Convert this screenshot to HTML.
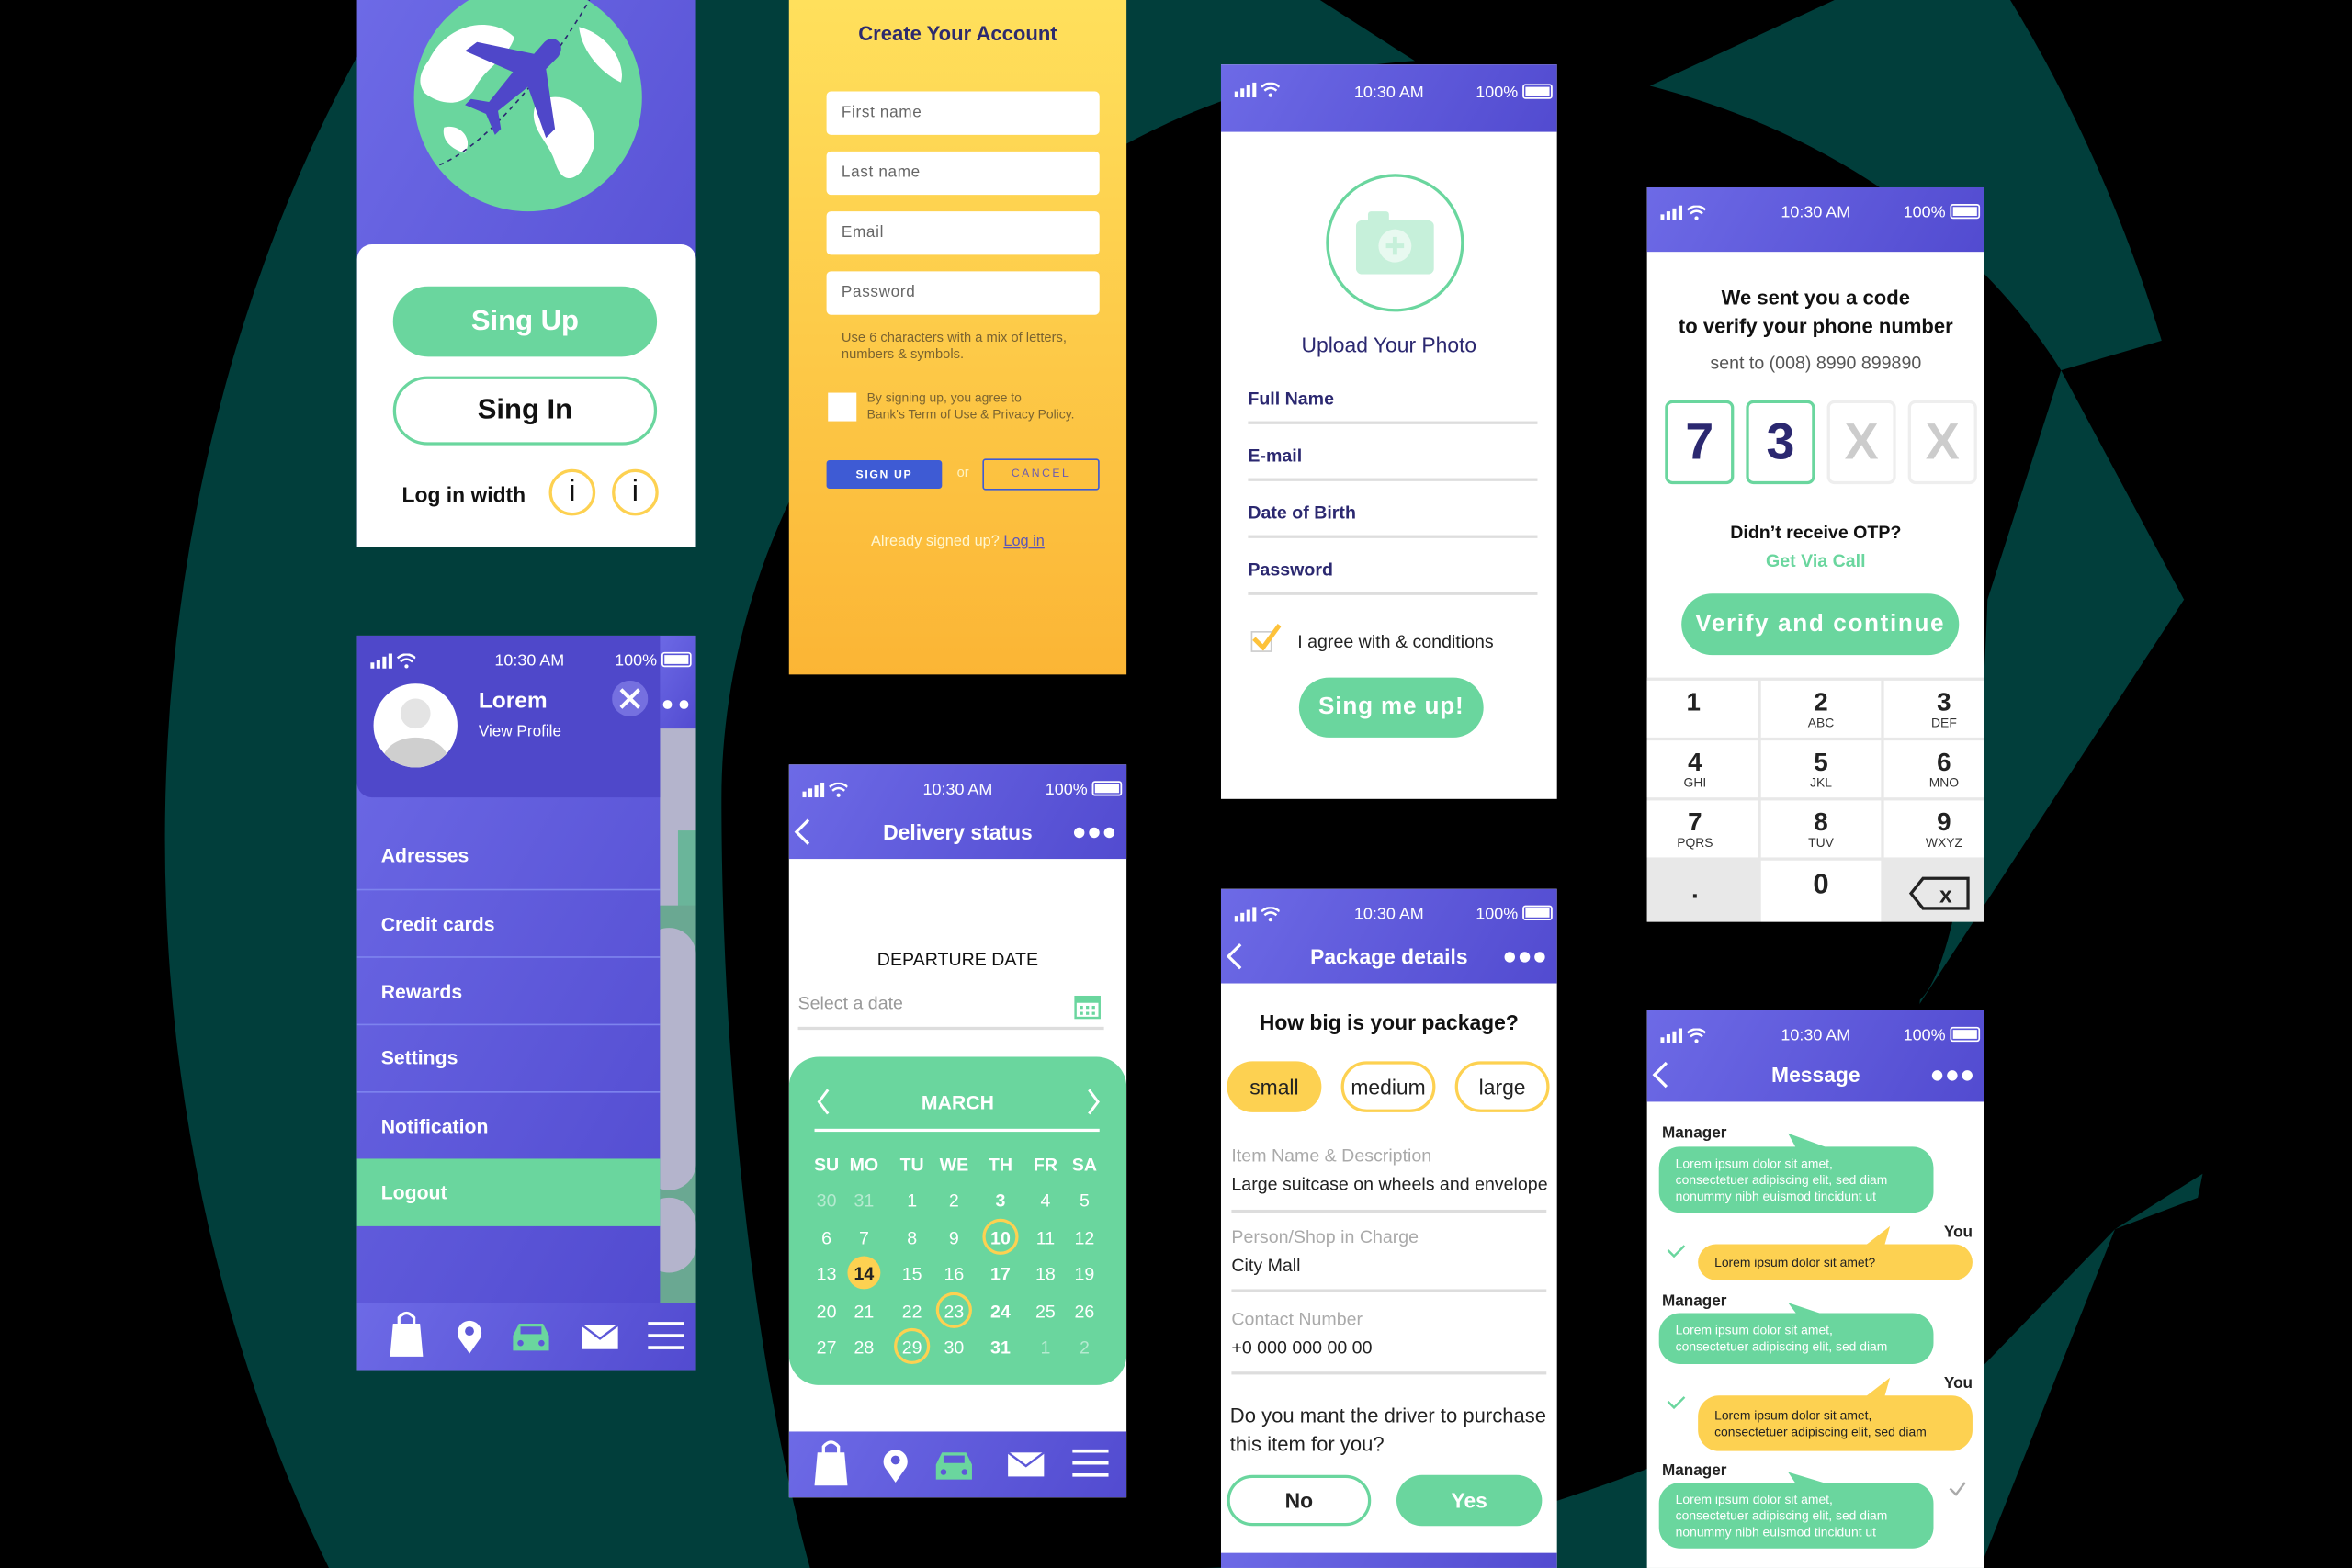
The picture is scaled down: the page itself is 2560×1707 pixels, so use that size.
<!DOCTYPE html>
<html><head><meta charset="utf-8"><style>
*{margin:0;padding:0;box-sizing:border-box}
html,body{width:2560px;height:1707px;overflow:hidden;background:#000}
#w{position:absolute;left:0;top:0;width:1568px;height:1046px;overflow:hidden;transform:scale(1.63265,1.6319);transform-origin:0 0;font-family:"Liberation Sans",sans-serif}
.a{position:absolute}
.pan{position:absolute;overflow:hidden;background:#fff}
.pur{background:linear-gradient(120deg,#6d6ae6,#524bd0)}
.sb{position:absolute;left:0;right:0;height:30px;color:#fff;font-size:11px}
.sb .t{position:absolute;left:0;right:0;text-align:center;top:11px}
.sb .p{position:absolute;right:26px;top:11px}
.sb .bat{position:absolute;right:3px;top:11px;width:20px;height:10px;border:1.5px solid #fff;border-radius:2px;background:#fff;box-shadow:inset 0 0 0 1px #5a55d8}
.sb .sig{position:absolute;left:9px;top:12px}
.hd{position:absolute;left:0;right:0;color:#fff;font-weight:bold;font-size:14px;text-align:center}
.dots{position:absolute;right:8px;color:#fff;font-size:10px;letter-spacing:2px}
.dots i{display:inline-block;width:7px;height:7px;border-radius:50%;background:#fff;margin-left:3px}
.g{background:#6ad69e}
.lbl{position:absolute;font-size:12px;font-weight:bold;color:#2b2870}
.ln{position:absolute;height:1.5px;background:#ddd}
.in{position:absolute;left:25px;width:182px;height:29px;background:#fff;border-radius:3px;font-size:10.5px;color:#666;padding:8px 10px;letter-spacing:.4px}
.cal span{position:absolute;width:24px;margin-left:-12px;text-align:center;color:#fff;font-size:12px}
.key{position:absolute;text-align:center;font-weight:bold;font-size:17px;color:#222;line-height:17px}
.key small{display:block;font-size:8.5px;font-weight:normal;line-height:10px;color:#333}
.bub{position:absolute;border-radius:14px;font-size:8.5px;line-height:11px;padding:6px 11px}
.mg{left:8px;width:183px;background:#6ad69e;color:#fff}
.yo{left:34px;width:183px;background:#fdd151;color:#222}
.nm{position:absolute;font-size:10.5px;font-weight:bold;color:#222}
</style></head><body><div id="w">
<svg class="a" style="left:0;top:0" width="1568" height="1046">
<ellipse cx="800" cy="560" rx="690" ry="900" fill="#013e3b"/>
<path d="M481 533 C481 280 700 45 960 40 C1150 40 1300 130 1374 247 L1325 400 C1320 550 1300 650 1280 667 L1260 900 C1100 1000 900 1046 800 1046 L540 1046 C500 900 481 700 481 533Z" fill="#000"/>
<path d="M880 0 L1223 0 L1036 87 L950 45Z" fill="#000"/>
<path d="M1374 247 L1568 190 L1568 420 L1456 400Z" fill="#000"/>
<path d="M1456 400 L1568 400 L1568 720 L1410 820 L1300 934 L1250 900 L1260 700Z" fill="#000"/>
<path d="M1410 820 L1568 760 L1568 1046 L1320 1046Z" fill="#000"/>
</svg>

<!-- Panel 1 -->
<div class="pan pur" style="left:238px;top:0;width:226px;height:365px">
<svg class="a" style="left:0;top:0" width="226" height="170">
<circle cx="114" cy="65" r="76" fill="#6ad69e"/>
<path d="M48 40 C60 15 90 10 105 25 C100 40 85 45 78 60 C70 72 55 70 45 62 C40 55 42 48 48 40Z M120 68 C138 58 160 72 158 98 C152 118 138 128 132 108 C128 94 112 84 120 68Z M148 18 C165 22 180 40 176 55 C165 50 150 36 148 18Z M58 85 C68 82 78 92 72 102 C64 100 56 94 58 85Z" fill="#fff"/>
<path d="M55 110 C80 100 120 60 155 0" stroke="#2b2870" stroke-width="1" stroke-dasharray="3 3" fill="none"/>
<path d="M125 28 L118 36 L80 28 L72 34 L104 48 L88 68 L76 66 L72 70 L86 76 L92 90 L96 86 L94 74 L114 58 L126 92 L132 86 L126 46 L134 38 C140 30 132 22 125 28Z" fill="#4f47c9"/>
</svg>
<div class="a" style="left:0;top:163px;width:226px;height:202px;background:#fff;border-radius:10px 10px 0 0"></div>
<div class="a g" style="left:24px;top:191px;width:176px;height:47px;border-radius:24px;color:#fff;font-weight:bold;font-size:19px;text-align:center;line-height:47px">Sing Up</div>
<div class="a" style="left:24px;top:251px;width:176px;height:46px;border-radius:24px;border:2px solid #6ad69e;color:#111;font-weight:bold;font-size:19px;text-align:center;line-height:42px">Sing In</div>
<div class="a" style="left:30px;top:322px;font-weight:bold;font-size:14px;color:#111">Log in width</div>
<div class="a" style="left:128px;top:313px;width:31px;height:31px;border-radius:50%;border:2px solid #fdd151;text-align:center;font-size:20px;line-height:27px;color:#111">i</div>
<div class="a" style="left:170px;top:313px;width:31px;height:31px;border-radius:50%;border:2px solid #fdd151;text-align:center;font-size:20px;line-height:27px;color:#111">i</div>
</div>

<!-- Panel 2 -->
<div class="pan" style="left:526px;top:0;width:225px;height:450px;background:linear-gradient(#ffe05c,#fbb535)">
<div class="a" style="left:0;right:0;top:15px;text-align:center;font-weight:bold;font-size:13.5px;color:#2d2a6e">Create Your Account</div>
<div class="in" style="top:61px">First name</div>
<div class="in" style="top:101px">Last name</div>
<div class="in" style="top:141px">Email</div>
<div class="in" style="top:181px">Password</div>
<div class="a" style="left:35px;top:220px;font-size:9px;color:#7a6330;line-height:11px">Use 6 characters with a mix of letters,<br>numbers &amp; symbols.</div>
<div class="a" style="left:26px;top:262px;width:19px;height:19px;background:#fff"></div>
<div class="a" style="left:52px;top:260px;font-size:8.5px;color:#7a6330;line-height:11px">By signing up, you agree to<br>Bank's Term of Use &amp; Privacy Policy.</div>
<div class="a" style="left:25px;top:307px;width:77px;height:19px;background:#3e5bd4;border-radius:2px;color:#fff;font-size:7.5px;font-weight:bold;letter-spacing:1px;text-align:center;line-height:19px">SIGN UP</div>
<div class="a" style="left:112px;top:310px;font-size:9px;color:#fff3c0">or</div>
<div class="a" style="left:129px;top:306px;width:78px;height:21px;border:1.5px solid #3e5bd4;border-radius:2px;color:#6a5ab0;font-size:7.5px;letter-spacing:1.5px;text-align:center;line-height:18px">CANCEL</div>
<div class="a" style="left:0;right:0;top:356px;text-align:center;font-size:10px;color:#fff6d0">Already signed up? <u style="color:#5a55b8">Log in</u></div>
</div>

<!-- Panel 3 -->
<div class="pan" style="left:814px;top:43px;width:224px;height:490px">
<div class="sb pur" style="height:45px"><svg class="sig" width="30" height="10"><rect x="0" y="6" width="2.5" height="4" fill="#fff"/><rect x="4" y="4" width="2.5" height="6" fill="#fff"/><rect x="8" y="2" width="2.5" height="8" fill="#fff"/><rect x="12" y="0" width="2.5" height="10" fill="#fff"/><path d="M18 3 Q24 -2 30 3 M20 5.5 Q24 2 28 5.5" stroke="#fff" stroke-width="1.5" fill="none"/><circle cx="24" cy="8.5" r="1.3" fill="#fff"/></svg><div class="t" style="top:13px">10:30 AM</div><div class="p" style="top:13px">100%</div><div class="bat" style="top:13px"></div></div>
<div class="a" style="left:70px;top:73px;width:92px;height:92px;border-radius:50%;border:2px solid #6ad69e"></div>
<svg class="a" style="left:90px;top:96px" width="52" height="44"><rect x="0" y="8" width="52" height="36" rx="4" fill="#c6f0da"/><rect x="8" y="2" width="14" height="8" rx="2" fill="#c6f0da"/><circle cx="26" cy="25" r="11" fill="#fff" opacity=".6"/><path d="M26 19 V31 M20 25 H32" stroke="#c6f0da" stroke-width="3"/></svg>
<div class="a" style="left:0;right:0;top:179px;text-align:center;font-size:14px;color:#2b2870">Upload Your Photo</div>
<div class="lbl" style="left:18px;top:216px">Full Name</div><div class="ln" style="left:18px;width:193px;top:238px"></div>
<div class="lbl" style="left:18px;top:254px">E-mail</div><div class="ln" style="left:18px;width:193px;top:276px"></div>
<div class="lbl" style="left:18px;top:292px">Date of Birth</div><div class="ln" style="left:18px;width:193px;top:314px"></div>
<div class="lbl" style="left:18px;top:330px">Password</div><div class="ln" style="left:18px;width:193px;top:352px"></div>
<div class="a" style="left:20px;top:378px;width:14px;height:14px;border:1.5px solid #ccc"></div>
<svg class="a" style="left:20px;top:373px" width="20" height="18"><path d="M2 10 L8 16 L19 1" stroke="#fdc23a" stroke-width="3" fill="none"/></svg>
<div class="a" style="left:51px;top:378px;font-size:12px;color:#222">I agree with &amp; conditions</div>
<div class="a g" style="left:52px;top:409px;width:123px;height:40px;border-radius:20px;color:#fff;font-weight:bold;font-size:16px;text-align:center;line-height:40px;letter-spacing:.5px">Sing me up!</div>
</div>

<!-- Panel 4 -->
<div class="pan" style="left:1098px;top:125px;width:225px;height:490px">
<div class="sb pur" style="height:43px"><svg class="sig" width="30" height="10"><rect x="0" y="6" width="2.5" height="4" fill="#fff"/><rect x="4" y="4" width="2.5" height="6" fill="#fff"/><rect x="8" y="2" width="2.5" height="8" fill="#fff"/><rect x="12" y="0" width="2.5" height="10" fill="#fff"/><path d="M18 3 Q24 -2 30 3 M20 5.5 Q24 2 28 5.5" stroke="#fff" stroke-width="1.5" fill="none"/><circle cx="24" cy="8.5" r="1.3" fill="#fff"/></svg><div class="t">10:30 AM</div><div class="p">100%</div><div class="bat"></div></div>
<div class="a" style="left:0;right:0;top:64px;text-align:center;font-weight:bold;font-size:13.5px;color:#111;line-height:19px">We sent you a code<br>to verify your phone number</div>
<div class="a" style="left:0;right:0;top:110px;text-align:center;font-size:12px;color:#555">sent to (008) 8990 899890</div>
<div class="a" style="left:12px;top:142px;width:46px;height:56px;border:2px solid #6ad69e;border-radius:5px;text-align:center;font-size:34px;font-weight:bold;color:#2b2870;line-height:52px">7</div>
<div class="a" style="left:66px;top:142px;width:46px;height:56px;border:2px solid #6ad69e;border-radius:5px;text-align:center;font-size:34px;font-weight:bold;color:#2b2870;line-height:52px">3</div>
<div class="a" style="left:120px;top:142px;width:46px;height:56px;border:2px solid #eee;border-radius:5px;text-align:center;font-size:34px;font-weight:bold;color:#ccc;line-height:52px">X</div>
<div class="a" style="left:174px;top:142px;width:46px;height:56px;border:2px solid #eee;border-radius:5px;text-align:center;font-size:34px;font-weight:bold;color:#ccc;line-height:52px">X</div>
<div class="a" style="left:0;right:0;top:223px;text-align:center;font-weight:bold;font-size:12px;color:#111">Didn’t receive OTP?</div>
<div class="a" style="left:0;right:0;top:242px;text-align:center;font-weight:bold;font-size:12px;color:#6ad69e">Get Via Call</div>
<div class="a g" style="left:23px;top:271px;width:185px;height:41px;border-radius:21px;color:#fff;font-weight:bold;font-size:16px;text-align:center;line-height:41px;letter-spacing:1px">Verify and continue</div>
<div class="a" style="left:0;top:327px;width:225px;height:163px;background:#e8e8e8"></div>
<div class="a" style="left:0;top:329px;width:74px;height:38px;background:#fff"></div><div class="a" style="left:76px;top:329px;width:80px;height:38px;background:#fff"></div><div class="a" style="left:158px;top:329px;width:67px;height:38px;background:#fff"></div>
<div class="a" style="left:0;top:369px;width:74px;height:38px;background:#fff"></div><div class="a" style="left:76px;top:369px;width:80px;height:38px;background:#fff"></div><div class="a" style="left:158px;top:369px;width:67px;height:38px;background:#fff"></div>
<div class="a" style="left:0;top:409px;width:74px;height:38px;background:#fff"></div><div class="a" style="left:76px;top:409px;width:80px;height:38px;background:#fff"></div><div class="a" style="left:158px;top:409px;width:67px;height:38px;background:#fff"></div>
<div class="a" style="left:76px;top:449px;width:80px;height:41px;background:#fff"></div>
<div class="key" style="left:16px;top:335px;width:30px;text-align:center">1</div>
<div class="key" style="left:96px;top:335px;width:40px">2<small>ABC</small></div>
<div class="key" style="left:178px;top:335px;width:40px">3<small>DEF</small></div>
<div class="key" style="left:12px;top:375px;width:40px">4<small>GHI</small></div>
<div class="key" style="left:96px;top:375px;width:40px">5<small>JKL</small></div>
<div class="key" style="left:178px;top:375px;width:40px">6<small>MNO</small></div>
<div class="key" style="left:12px;top:415px;width:40px">7<small>PQRS</small></div>
<div class="key" style="left:96px;top:415px;width:40px">8<small>TUV</small></div>
<div class="key" style="left:178px;top:415px;width:40px">9<small>WXYZ</small></div>
<div class="key" style="left:12px;top:460px;width:40px">.</div>
<div class="key" style="left:96px;top:457px;width:40px;font-size:19px">0</div>
<svg class="a" style="left:174px;top:459px" width="42" height="24"><path d="M10 2 H40 V22 H10 L2 12Z" stroke="#222" stroke-width="2" fill="none"/><text x="21" y="18" font-family="Liberation Sans" font-weight="bold" font-size="15" fill="#222">x</text></svg>
</div>

<!-- Panel 5 menu -->
<div class="pan" style="left:238px;top:424px;width:226px;height:490px;background:#b4b4cc">
<div class="a pur" style="left:200px;top:0;width:26px;height:62px"></div>
<div class="a" style="left:214px;top:130px;width:12px;height:60px;background:#6ab59a"></div>
<div class="a" style="left:200px;top:180px;width:26px;height:270px;background:#6aa892"></div>
<div class="a" style="left:190px;top:195px;width:36px;height:175px;background:#b4b4cc;border-radius:18px"></div>
<div class="a" style="left:190px;top:375px;width:36px;height:50px;background:#b4b4cc;border-radius:20px"></div>
<div class="a" style="left:204px;top:43px;width:6px;height:6px;border-radius:50%;background:#fff"></div><div class="a" style="left:215px;top:43px;width:6px;height:6px;border-radius:50%;background:#fff"></div>
<div class="a" style="left:0;top:0;width:202px;height:445px;background:linear-gradient(120deg,#6d6ae6,#524bd0)"></div>
<div class="a" style="left:0;top:0;width:202px;height:108px;background:#4f48ca;border-radius:0 0 0 10px"></div>
<div class="sb"><svg class="sig" width="30" height="10"><rect x="0" y="6" width="2.5" height="4" fill="#fff"/><rect x="4" y="4" width="2.5" height="6" fill="#fff"/><rect x="8" y="2" width="2.5" height="8" fill="#fff"/><rect x="12" y="0" width="2.5" height="10" fill="#fff"/><path d="M18 3 Q24 -2 30 3 M20 5.5 Q24 2 28 5.5" stroke="#fff" stroke-width="1.5" fill="none"/><circle cx="24" cy="8.5" r="1.3" fill="#fff"/></svg><div class="t" style="right:26px;left:0;text-align:center;padding-left:30px">10:30 AM</div><div class="p">100%</div><div class="bat"></div></div>
<svg class="a" style="left:11px;top:32px" width="56" height="56"><circle cx="28" cy="28" r="28" fill="#fff"/><clipPath id="cc"><circle cx="28" cy="28" r="28"/></clipPath><g clip-path="url(#cc)"><circle cx="28" cy="20" r="10" fill="#e4e4e4"/><ellipse cx="28" cy="52" rx="22" ry="16" fill="#cfcfcf"/></g></svg>
<div class="a" style="left:81px;top:35px;font-weight:bold;font-size:15px;color:#fff">Lorem</div>
<div class="a" style="left:81px;top:58px;font-size:10.5px;color:#fff">View Profile</div>
<svg class="a" style="left:170px;top:30px" width="24" height="24"><circle cx="12" cy="12" r="12" fill="#7570e0"/><path d="M6 6 L18 18 M18 6 L6 18" stroke="#fff" stroke-width="2.5"/></svg>
<div class="a" style="left:16px;top:139px;color:#fff;font-weight:bold;font-size:13px">Adresses</div>
<div class="a" style="left:0;top:169px;width:202px;height:1px;background:#7d83ee"></div>
<div class="a" style="left:16px;top:185px;color:#fff;font-weight:bold;font-size:13px">Credit cards</div>
<div class="a" style="left:0;top:214px;width:202px;height:1px;background:#7d83ee"></div>
<div class="a" style="left:16px;top:230px;color:#fff;font-weight:bold;font-size:13px">Rewards</div>
<div class="a" style="left:0;top:259px;width:202px;height:1px;background:#7d83ee"></div>
<div class="a" style="left:16px;top:274px;color:#fff;font-weight:bold;font-size:13px">Settings</div>
<div class="a" style="left:0;top:304px;width:202px;height:1px;background:#7d83ee"></div>
<div class="a" style="left:16px;top:320px;color:#fff;font-weight:bold;font-size:13px">Notification</div>
<div class="a g" style="left:0;top:349px;width:202px;height:45px"></div>
<div class="a" style="left:16px;top:364px;color:#fff;font-weight:bold;font-size:13px">Logout</div>
<div class="a pur" style="left:0;top:445px;width:226px;height:45px"></div>
<svg class="a" style="left:0;top:445px" width="226" height="45">
<path d="M24 14 H42 L44 36 H22Z" fill="#fff"/><path d="M28 16 V10 Q33 4 38 10 V16" stroke="#fff" stroke-width="2" fill="none"/>
<path d="M75 34 L68 24 A8 8 0 1 1 82 24Z" fill="#fff"/><circle cx="75" cy="19" r="3" fill="#5d58d8"/>
<path d="M104 22 L108 14 H124 L128 22 V32 H104Z" fill="#6ad69e"/><rect x="109" y="16" width="14" height="5" fill="#5d58d8"/><circle cx="109" cy="27" r="2" fill="#5d58d8"/><circle cx="123" cy="27" r="2" fill="#5d58d8"/>
<rect x="150" y="15" width="24" height="16" fill="#fff"/><path d="M150 15 L162 24 L174 15" stroke="#5d58d8" stroke-width="1.5" fill="none"/>
<path d="M194 14 H218 M194 22 H218 M194 30 H218" stroke="#fff" stroke-width="2.2"/>
</svg>
</div>

<!-- Panel 6 -->
<div class="pan" style="left:526px;top:510px;width:225px;height:489px">
<div class="sb pur" style="height:63px"><svg class="sig" width="30" height="10"><rect x="0" y="6" width="2.5" height="4" fill="#fff"/><rect x="4" y="4" width="2.5" height="6" fill="#fff"/><rect x="8" y="2" width="2.5" height="8" fill="#fff"/><rect x="12" y="0" width="2.5" height="10" fill="#fff"/><path d="M18 3 Q24 -2 30 3 M20 5.5 Q24 2 28 5.5" stroke="#fff" stroke-width="1.5" fill="none"/><circle cx="24" cy="8.5" r="1.3" fill="#fff"/></svg><div class="t">10:30 AM</div><div class="p">100%</div><div class="bat"></div>
<svg class="a" style="left:2px;top:35px" width="14" height="20"><path d="M11 2 L3 10 L11 18" stroke="#fff" stroke-width="2" fill="none"/></svg>
<div class="hd" style="top:37px">Delivery status</div><div class="dots" style="top:41px"><i></i><i></i><i></i></div></div>
<div class="a" style="left:0;right:0;top:123px;text-align:center;font-size:12px;color:#111">DEPARTURE DATE</div>
<div class="a" style="left:6px;top:152px;font-size:12px;color:#999">Select a date</div>
<svg class="a" style="left:190px;top:153px" width="18" height="17"><rect x="1" y="2" width="16" height="14" fill="none" stroke="#6ad69e" stroke-width="1.5"/><rect x="1" y="2" width="16" height="4" fill="#6ad69e"/><g fill="#6ad69e"><rect x="4" y="8" width="2" height="2"/><rect x="8" y="8" width="2" height="2"/><rect x="12" y="8" width="2" height="2"/><rect x="4" y="12" width="2" height="2"/><rect x="8" y="12" width="2" height="2"/><rect x="12" y="12" width="2" height="2"/></g></svg>
<div class="ln" style="left:6px;width:204px;top:175px"></div>
<div class="a g cal" style="left:0;top:195px;width:225px;height:219px;border-radius:20px">
<svg class="a" style="left:18px;top:20px" width="190" height="20"><path d="M8 2 L2 10 L8 18 M182 2 L188 10 L182 18" stroke="#fff" stroke-width="1.8" fill="none"/></svg>
<div class="a" style="left:0;right:0;top:23px;text-align:center;color:#fff;font-weight:bold;font-size:13px">MARCH</div>
<div class="a" style="left:17px;top:48px;width:190px;height:2px;background:#fff"></div>
<div style="font-weight:bold"><span style="left:25px;top:65px">SU</span><span style="left:50px;top:65px">MO</span><span style="left:82px;top:65px">TU</span><span style="left:110px;top:65px">WE</span><span style="left:141px;top:65px">TH</span><span style="left:171px;top:65px">FR</span><span style="left:197px;top:65px">SA</span></div>
<div style="position:absolute;left:0;top:89px;width:225px">
<span style="left:25px;color:#b5ead0">30</span><span style="left:50px;color:#b5ead0">31</span><span style="left:82px">1</span><span style="left:110px">2</span><span style="left:141px;font-weight:bold">3</span><span style="left:171px">4</span><span style="left:197px">5</span></div>
<div style="position:absolute;left:0;top:114px;width:225px">
<span style="left:25px">6</span><span style="left:50px">7</span><span style="left:82px">8</span><span style="left:110px">9</span><span style="left:141px;font-weight:bold">10</span><span style="left:171px">11</span><span style="left:197px">12</span></div>
<div style="position:absolute;left:0;top:138px;width:225px">
<span style="left:25px">13</span><span style="left:50px;color:#222;font-weight:bold">14</span><span style="left:82px">15</span><span style="left:110px">16</span><span style="left:141px;font-weight:bold">17</span><span style="left:171px">18</span><span style="left:197px">19</span></div>
<div style="position:absolute;left:0;top:163px;width:225px">
<span style="left:25px">20</span><span style="left:50px">21</span><span style="left:82px">22</span><span style="left:110px">23</span><span style="left:141px;font-weight:bold">24</span><span style="left:171px">25</span><span style="left:197px">26</span></div>
<div style="position:absolute;left:0;top:187px;width:225px">
<span style="left:25px">27</span><span style="left:50px">28</span><span style="left:82px">29</span><span style="left:110px">30</span><span style="left:141px;font-weight:bold">31</span><span style="left:171px;color:#b5ead0">1</span><span style="left:197px;color:#b5ead0">2</span></div>
<svg class="a" style="left:0;top:0" width="225" height="219"><circle cx="141" cy="120" r="11" fill="none" stroke="#fdd151" stroke-width="2"/><circle cx="110" cy="169" r="11" fill="none" stroke="#fdd151" stroke-width="2"/><circle cx="82" cy="193" r="11" fill="none" stroke="#fdd151" stroke-width="2"/><circle cx="50" cy="144" r="11" fill="#fdd151"/><text x="50" y="148.5" text-anchor="middle" font-family="Liberation Sans" font-weight="bold" font-size="12" fill="#222">14</text></svg>
</div>
<div class="a pur" style="left:0;top:445px;width:225px;height:44px"></div>
<svg class="a" style="left:0;top:445px" width="225" height="44">
<path d="M19 14 H37 L39 36 H17Z" fill="#fff"/><path d="M23 16 V10 Q28 4 33 10 V16" stroke="#fff" stroke-width="2" fill="none"/>
<path d="M71 34 L64 24 A8 8 0 1 1 78 24Z" fill="#fff"/><circle cx="71" cy="19" r="3" fill="#5d58d8"/>
<path d="M98 22 L102 14 H118 L122 22 V32 H98Z" fill="#6ad69e"/><rect x="103" y="16" width="14" height="5" fill="#5d58d8"/><circle cx="103" cy="27" r="2" fill="#5d58d8"/><circle cx="117" cy="27" r="2" fill="#5d58d8"/>
<rect x="146" y="14" width="24" height="16" fill="#fff"/><path d="M146 14 L158 23 L170 14" stroke="#5d58d8" stroke-width="1.5" fill="none"/>
<path d="M189 13 H213 M189 21 H213 M189 29 H213" stroke="#fff" stroke-width="2.2"/>
</svg>
</div>

<!-- Panel 7 -->
<div class="pan" style="left:814px;top:593px;width:224px;height:453px">
<div class="sb pur" style="height:63px"><svg class="sig" width="30" height="10"><rect x="0" y="6" width="2.5" height="4" fill="#fff"/><rect x="4" y="4" width="2.5" height="6" fill="#fff"/><rect x="8" y="2" width="2.5" height="8" fill="#fff"/><rect x="12" y="0" width="2.5" height="10" fill="#fff"/><path d="M18 3 Q24 -2 30 3 M20 5.5 Q24 2 28 5.5" stroke="#fff" stroke-width="1.5" fill="none"/><circle cx="24" cy="8.5" r="1.3" fill="#fff"/></svg><div class="t">10:30 AM</div><div class="p">100%</div><div class="bat"></div>
<svg class="a" style="left:2px;top:35px" width="14" height="20"><path d="M11 2 L3 10 L11 18" stroke="#fff" stroke-width="2" fill="none"/></svg>
<div class="hd" style="top:37px">Package details</div><div class="dots" style="top:41px"><i></i><i></i><i></i></div></div>
<div class="a" style="left:0;right:0;top:81px;text-align:center;font-weight:bold;font-size:14px;color:#111">How big is your package?</div>
<div class="a" style="left:4px;top:115px;width:63px;height:34px;border-radius:17px;background:#fdd151;text-align:center;line-height:34px;font-size:14px;color:#222">small</div>
<div class="a" style="left:80px;top:115px;width:63px;height:34px;border-radius:17px;border:2px solid #fdd151;text-align:center;line-height:30px;font-size:14px;color:#222">medium</div>
<div class="a" style="left:156px;top:115px;width:63px;height:34px;border-radius:17px;border:2px solid #fdd151;text-align:center;line-height:30px;font-size:14px;color:#222">large</div>
<div class="a" style="left:7px;top:171px;font-size:12px;color:#aaa">Item Name &amp; Description</div>
<div class="a" style="left:7px;top:190px;font-size:12px;color:#222;white-space:nowrap">Large suitcase on wheels and envelope</div>
<div class="ln" style="left:7px;width:210px;top:214px"></div>
<div class="a" style="left:7px;top:225px;font-size:12px;color:#aaa">Person/Shop in Charge</div>
<div class="a" style="left:7px;top:244px;font-size:12px;color:#222">City Mall</div>
<div class="ln" style="left:7px;width:210px;top:267px"></div>
<div class="a" style="left:7px;top:280px;font-size:12px;color:#aaa">Contact Number</div>
<div class="a" style="left:7px;top:299px;font-size:12px;color:#222">+0 000 000 00 00</div>
<div class="ln" style="left:7px;width:210px;top:322px"></div>
<div class="a" style="left:6px;top:342px;font-size:13.5px;color:#222;line-height:19px;white-space:nowrap">Do you mant the driver to purchase<br>this item for you?</div>
<div class="a" style="left:4px;top:391px;width:96px;height:34px;border-radius:17px;border:2px solid #6ad69e;text-align:center;line-height:30px;font-size:14px;font-weight:bold;color:#222">No</div>
<div class="a g" style="left:117px;top:391px;width:97px;height:34px;border-radius:17px;text-align:center;line-height:34px;font-size:14px;font-weight:bold;color:#fff">Yes</div>
<div class="a pur" style="left:0;top:443px;width:224px;height:10px"></div>
</div>

<!-- Panel 8 -->
<div class="pan" style="left:1098px;top:674px;width:225px;height:372px">
<div class="sb pur" style="height:61px"><svg class="sig" width="30" height="10"><rect x="0" y="6" width="2.5" height="4" fill="#fff"/><rect x="4" y="4" width="2.5" height="6" fill="#fff"/><rect x="8" y="2" width="2.5" height="8" fill="#fff"/><rect x="12" y="0" width="2.5" height="10" fill="#fff"/><path d="M18 3 Q24 -2 30 3 M20 5.5 Q24 2 28 5.5" stroke="#fff" stroke-width="1.5" fill="none"/><circle cx="24" cy="8.5" r="1.3" fill="#fff"/></svg><div class="t">10:30 AM</div><div class="p">100%</div><div class="bat"></div>
<svg class="a" style="left:2px;top:33px" width="14" height="20"><path d="M11 2 L3 10 L11 18" stroke="#fff" stroke-width="2" fill="none"/></svg>
<div class="hd" style="top:35px">Message</div><div class="dots" style="top:39px"><i></i><i></i><i></i></div></div>
<div class="nm" style="left:10px;top:76px">Manager</div>
<div class="bub mg" style="top:91px;height:44px">Lorem ipsum dolor sit amet,<br>consectetuer adipiscing elit, sed diam<br>nonummy nibh euismod tincidunt ut</div>
<div class="nm" style="left:198px;top:142px">You</div>
<div class="bub yo" style="top:156px;height:24px;padding-top:7px">Lorem ipsum dolor sit amet?</div>
<div class="nm" style="left:10px;top:188px">Manager</div>
<div class="bub mg" style="top:202px;height:34px">Lorem ipsum dolor sit amet,<br>consectetuer adipiscing elit, sed diam</div>
<div class="nm" style="left:198px;top:243px">You</div>
<div class="bub yo" style="top:257px;height:37px;padding-top:8px">Lorem ipsum dolor sit amet,<br>consectetuer adipiscing elit, sed diam</div>
<div class="nm" style="left:10px;top:301px">Manager</div>
<div class="bub mg" style="top:315px;height:44px">Lorem ipsum dolor sit amet,<br>consectetuer adipiscing elit, sed diam<br>nonummy nibh euismod tincidunt ut</div>
<svg class="a" style="left:0;top:0" width="225" height="372">
<path d="M94 82 L124 93 L100 93Z" fill="#6ad69e"/>
<path d="M162 144 L144 158 L158 158Z" fill="#fdd151"/>
<path d="M94 195 L118 203 L100 203Z" fill="#6ad69e"/>
<path d="M162 245 L144 259 L158 259Z" fill="#fdd151"/>
<path d="M94 308 L124 317 L100 317Z" fill="#6ad69e"/>
<path d="M14 160 L18 164 L25 157 M14 261 L18 265 L25 258" stroke="#6ad69e" stroke-width="1.5" fill="none"/>
<path d="M202 319 L206 323 L212 315" stroke="#aaa" stroke-width="1.5" fill="none"/>
</svg>
</div>

</div></body></html>
